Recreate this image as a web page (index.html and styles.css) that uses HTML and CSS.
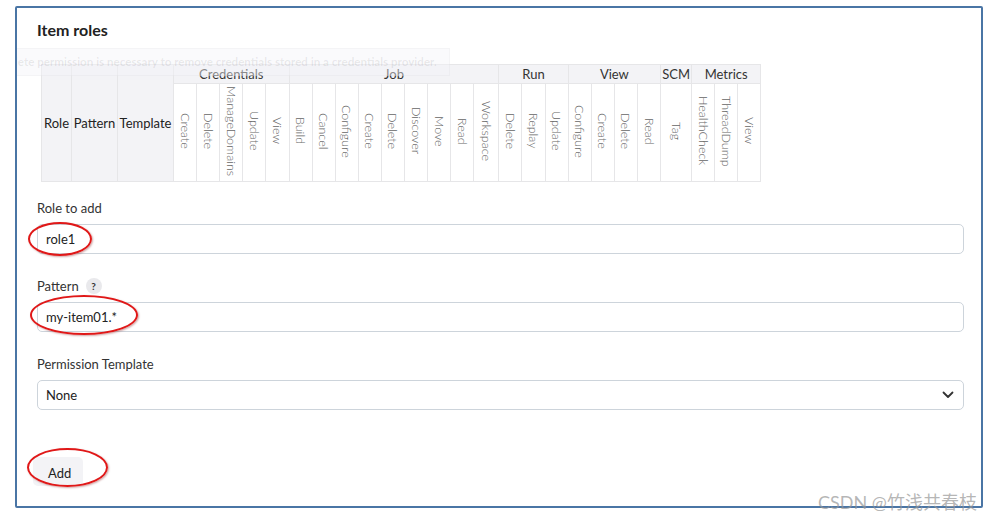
FILE: index.html
```html
<!DOCTYPE html>
<html lang="en">
<head>
    <meta charset="UTF-8">
    <meta name="viewport" content="width=device-width, initial-scale=1.0">
    <title>Item roles</title>
    <link rel="stylesheet" href="styles.css">
</head>
<body>
    <div class="frame">
        <div class="tooltip">Delete permission is necessary to remove credentials stored in a credentials provider.</div>

        <h2 class="section-title">Item roles</h2>

        <table class="role-table">
            <colgroup>
                <col class="c-role"><col class="c-pattern"><col class="c-template">
                <col span="5" class="c-perm">
                <col span="8" class="c-perm"><col class="c-wide">
                <col span="3" class="c-perm">
                <col span="4" class="c-perm">
                <col class="c-scm">
                <col span="3" class="c-perm">
            </colgroup>
            <thead>
                <tr class="group-row">
                    <th rowspan="2" class="head">Role</th>
                    <th rowspan="2" class="head">Pattern</th>
                    <th rowspan="2" class="head">Template</th>
                    <th colspan="5">Credentials</th>
                    <th colspan="9">Job</th>
                    <th colspan="3">Run</th>
                    <th colspan="4">View</th>
                    <th colspan="1">SCM</th>
                    <th colspan="3">Metrics</th>
                </tr>
                <tr class="perm-row">
                    <th><span>Create</span></th>
                    <th><span>Delete</span></th>
                    <th><span>ManageDomains</span></th>
                    <th><span>Update</span></th>
                    <th><span>View</span></th>
                    <th><span>Build</span></th>
                    <th><span>Cancel</span></th>
                    <th><span>Configure</span></th>
                    <th><span>Create</span></th>
                    <th><span>Delete</span></th>
                    <th><span>Discover</span></th>
                    <th><span>Move</span></th>
                    <th><span>Read</span></th>
                    <th><span>Workspace</span></th>
                    <th><span>Delete</span></th>
                    <th><span>Replay</span></th>
                    <th><span>Update</span></th>
                    <th><span>Configure</span></th>
                    <th><span>Create</span></th>
                    <th><span>Delete</span></th>
                    <th><span>Read</span></th>
                    <th><span>Tag</span></th>
                    <th><span>HealthCheck</span></th>
                    <th><span>ThreadDump</span></th>
                    <th><span>View</span></th>
                </tr>
            </thead>
        </table>

        <div class="field first">
            <label class="field-label">Role to add</label>
            <div class="text-box">role1</div>
        </div>

        <div class="field">
            <label class="field-label">Pattern <span class="help">?</span></label>
            <div class="text-box">my-item01.*</div>
        </div>

        <div class="field">
            <label class="field-label">Permission Template</label>
            <div class="text-box select-box">
                <span>None</span>
                <svg class="chevron" width="12" height="8" viewBox="0 0 12 8"><path d="M1.5 1.5 L6 6 L10.5 1.5" fill="none" stroke="#333" stroke-width="1.8" stroke-linecap="round" stroke-linejoin="round"/></svg>
            </div>
        </div>

        <button class="btn-add">Add</button>
    </div>

    <!-- red annotation marks -->
    <div class="mark mark-role"></div>
    <div class="mark mark-pattern"></div>
    <div class="mark mark-add"></div>

    <div class="watermark">CSDN @竹浅共春枝</div>
</body>
</html>
```

FILE: styles.css
```css
body {
    margin: 0;
    padding: 0;
    background-color: #fff;
    font-family: Lato, "Noto Sans", "Noto Sans CJK SC", sans-serif;
    color: #333;
}

.frame {
    position: relative;
    box-sizing: border-box;
    width: 968px;
    height: 502px;
    margin: 6px 0 0 15px;
    padding: 12px 17px 0 20px;
    border: 2px solid #4a75a5;
    border-radius: 2px;
    overflow: hidden;
}

.tooltip {
    position: absolute;
    left: -26px;
    top: 40px;
    width: 449px;
    padding: 6px 0 7px 8px;
    font-size: 11.6px;
    font-weight: bold;
    color: rgba(60, 60, 70, 0.1);
    background-color: rgba(245, 245, 248, 0.45);
    border: 1px solid rgba(0, 0, 0, 0.025);
    white-space: nowrap;
}

.section-title {
    margin: 0 0 24px 0;
    font-size: 16px;
    line-height: 20px;
    font-weight: bold;
    color: #222;
}

.role-table {
    table-layout: fixed;
    width: 719px;
    margin-left: 4px;
    border-collapse: collapse;
    font-size: 13px;
}

.c-role { width: 30px; }
.c-pattern { width: 46px; }
.c-template { width: 56px; }
.c-perm { width: 23.1px; }
.c-wide { width: 25px; }
.c-scm { width: 31px; }

.role-table th {
    padding: 0;
    border: 1px solid #e6e6e8;
    font-weight: normal;
    white-space: nowrap;
}

.group-row th {
    height: 18px;
    background-color: #f3f3f6;
    color: #333;
    text-align: center;
}

.group-row th.head {
    color: #222;
    vertical-align: middle;
}

.perm-row th {
    height: 97px;
    background-color: #fff;
    text-align: center;
    vertical-align: middle;
}

.perm-row span {
    display: inline-block;
    writing-mode: vertical-rl;
    font-size: 12.5px;
    font-weight: 300;
    color: #666;
}

.field.first {
    margin-top: 17px;
}

.field {
    margin-bottom: 23px;
}

.field-label {
    display: flex;
    align-items: center;
    gap: 7px;
    height: 18px;
    margin-bottom: 7px;
    font-size: 13px;
}

.help {
    display: inline-flex;
    align-items: center;
    justify-content: center;
    width: 16px;
    height: 16px;
    border-radius: 50%;
    background-color: #e9e9ec;
    font-size: 10px;
    font-weight: bold;
    color: #333;
}

.text-box {
    box-sizing: border-box;
    height: 30px;
    padding: 0 8px;
    border: 1.5px solid #cdd4db;
    border-radius: 5px;
    display: flex;
    align-items: center;
    font-size: 13px;
    color: #222;
}

.select-box {
    justify-content: space-between;
    padding-right: 9px;
}

.btn-add {
    margin: 24px 0 0 -4px;
    height: 29px;
    padding: 2px 12px 0 15px;
    border: none;
    border-radius: 5px;
    background-color: #f3f3f6;
    font-family: Lato, sans-serif;
    font-size: 13px;
    color: #222;
}

.mark {
    position: absolute;
    box-sizing: border-box;
    border: 2px solid #e01818;
    border-radius: 50%;
    box-shadow: 1px 1px 2px rgba(120, 0, 0, 0.35);
}

.mark-role { left: 28px; top: 222px; width: 64px; height: 34px; }
.mark-pattern { left: 30px; top: 295px; width: 108px; height: 40px; }
.mark-add { left: 27px; top: 448px; width: 81px; height: 39px; }

.watermark {
    position: absolute;
    left: 818px;
    top: 488px;
    font-size: 18px;
    color: rgba(150, 150, 150, 0.7);
    white-space: nowrap;
}
```
